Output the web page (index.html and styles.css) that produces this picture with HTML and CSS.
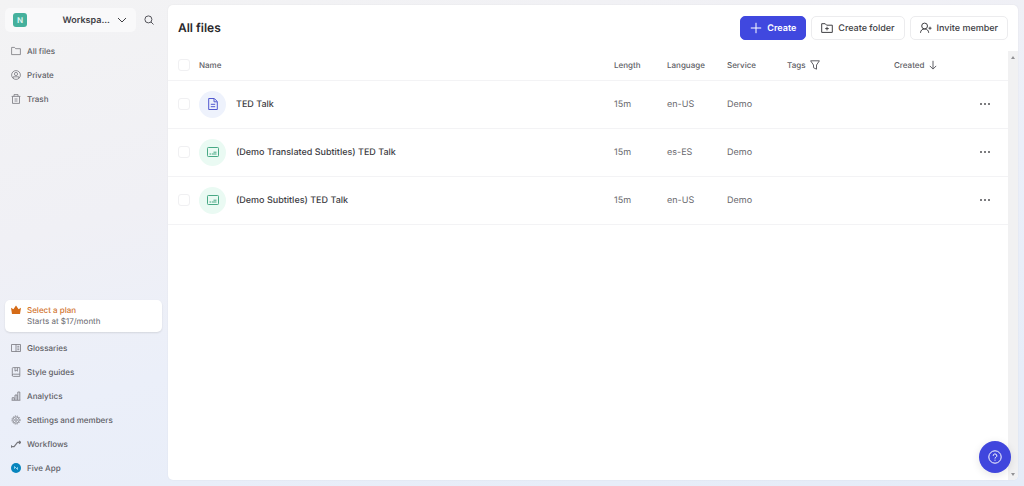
FILE: index.html
```html
<!DOCTYPE html>
<html lang="en">
<head>
<meta charset="utf-8">
<title>All files</title>
<link rel="stylesheet" href="styles.css">
</head>
<body>
<svg class="defs" aria-hidden="true">
  <symbol id="subtitles" viewBox="0 0 14 14"><rect x="1.5" y="2.5" width="11" height="9" rx=".8"/><path d="M3.5 9h1.8M6 9h4.5M7.5 7.2h3"/></symbol>
  <symbol id="dots" viewBox="0 0 12 4"><circle cx="2" cy="2" r="1"/><circle cx="6" cy="2" r="1"/><circle cx="10" cy="2" r="1"/></symbol>
</svg>
<div class="app">
  <aside class="sidebar">
    <div class="top">
      <button class="workspace" type="button">
        <span class="avatar">N</span>
        <span class="workspace-name">Workspa...</span>
        <svg class="icon" viewBox="0 0 10 10"><path d="M1 3l4 4 4-4"/></svg>
      </button>
      <button class="search" type="button" aria-label="Search"><svg class="icon" viewBox="0 0 10 10"><circle cx="4.4" cy="4.4" r="3.5"/><path d="M7 7l2.5 2.5"/></svg></button>
    </div>
    <nav class="nav">
      <a href="#"><svg class="icon" viewBox="0 0 10 10"><path d="M.6 8.6V1.4h2.9l1.2 1.3h4.7v5.9z"/></svg>All files</a>
      <a href="#"><svg class="icon" viewBox="0 0 10 10"><circle cx="5" cy="5" r="4.4"/><circle cx="5" cy="4" r="1.6"/><path d="M2.2 8.2V6.8h5.6v1.4"/></svg>Private</a>
      <a href="#"><svg class="icon" viewBox="0 0 10 10"><path d="M.6 2.4h8.8M3 2.2V.6h4v1.6M1.5 2.6v6.8h7V2.6M3.5 5h3M3.5 7h3"/></svg>Trash</a>
    </nav>
    <a class="plan" href="#">
      <svg class="crown" viewBox="0 0 10 10"><path d="M0 2.8l2.4 1.5L5 .5l2.6 3.8L10 2.8 9 9H1z"/></svg>
      <span><strong>Select a plan</strong><small>Starts at $17/month</small></span>
    </a>
    <nav class="nav">
      <a href="#"><svg class="icon" viewBox="0 0 10 10"><path d="M.5 1.5h9v7h-9zM5 1.5v7M6.3 3.3h2M6.3 5h2M6.3 6.7h2"/></svg>Glossaries</a>
      <a href="#"><svg class="icon" viewBox="0 0 10 10"><path d="M8.8 7.2H2.4a1 1 0 0 0 0 2.2h6.4V.6H2.2a.9.9 0 0 0-.9.9v6.9M4 .8v3.4l1.2-1 1.2 1V.8"/></svg>Style guides</a>
      <a href="#"><svg class="icon" viewBox="0 0 10 10"><path d="M.6 9.3h8.8M1.2 9V6.7h2V9M4 9V4h2v5M6.8 9V1h2v8"/></svg>Analytics</a>
      <a href="#"><svg class="icon" viewBox="0 0 10 10"><circle class="gear" cx="5" cy="5" r="4.1"/><circle cx="5" cy="5" r="3.2"/><circle cx="5" cy="5" r="1.3"/></svg>Settings and members</a>
      <a href="#"><svg class="icon flow" viewBox="0 0 10 10"><path d="M.3 7.6h2.8l3.4-4.2h2.2M.3 6.3v2.5M8 2l1.7 1.4L8 4.8"/></svg>Workflows</a>
      <a href="#"><svg class="five" viewBox="0 0 10 10"><circle cx="5" cy="5" r="5"/><path d="M3.5 3.5v2.3M3.5 3.5l3 3M6.5 6.5V4.2"/></svg>Five App</a>
    </nav>
  </aside>
  <main class="panel">
    <header class="header">
      <h1>All files</h1>
      <button class="btn primary" type="button"><svg class="icon" viewBox="0 0 12 12"><path d="M6 .8v10.4M.8 6h10.4"/></svg>Create</button>
      <button class="btn" type="button"><svg class="icon" viewBox="0 0 12 12"><path d="M.7 10.4V1.7h3.5l1.4 1.5h5.7v7.2zM6 4.8v3.6M4.2 6.6h3.6"/></svg>Create folder</button>
      <button class="btn" type="button"><svg class="icon" viewBox="0 0 12 12"><circle cx="4.6" cy="4" r="2.9"/><path d="M.5 10.8C.7 8.4 2 7 4.6 7s3.9 1.4 4.1 3.8M10 4.7v3M8.5 6.2h3"/></svg>Invite member</button>
    </header>
    <div class="body">
      <div class="scroll">
        <table>
          <colgroup><col class="c-check"><col><col class="c-length"><col class="c-mid"><col class="c-mid"><col class="c-tags"><col class="c-mid"><col class="c-more"></colgroup>
          <thead>
            <tr><th><input type="checkbox" aria-label="Select all"></th><th>Name</th><th>Length</th><th>Language</th><th>Service</th>
              <th><span class="label">Tags <svg class="icon" viewBox="0 0 10 10"><path d="M.6.8h8.8L6.5 5v4.2l-3-1.5V5z"/></svg></span></th>
              <th><span class="label">Created <svg class="icon sort" viewBox="0 0 8 10"><path d="M4 .8v8.2M.8 5.9L4 9.1l3.2-3.2"/></svg></span></th><th></th></tr>
          </thead>
          <tbody>
            <tr><td><input type="checkbox" aria-label="Select TED Talk"></td><td><div class="file"><span class="badge doc"><svg class="icon" viewBox="0 0 14 14"><path d="M2.7 1.5h5.6l3 3v8H2.7zM8 1.7v3.1h3M4.8 7.3h4.4M4.8 9.7h4.4"/></svg></span>TED Talk</div></td><td>15m</td><td>en-US</td><td>Demo</td><td></td><td></td><td><button class="more" type="button" aria-label="More"><svg viewBox="0 0 12 4"><use href="#dots"/></svg></button></td></tr>
            <tr><td><input type="checkbox" aria-label="Select translated subtitles"></td><td><div class="file"><span class="badge sub"><svg class="icon"><use href="#subtitles"/></svg></span>(Demo Translated Subtitles) TED Talk</div></td><td>15m</td><td>es-ES</td><td>Demo</td><td></td><td></td><td><button class="more" type="button" aria-label="More"><svg viewBox="0 0 12 4"><use href="#dots"/></svg></button></td></tr>
            <tr><td><input type="checkbox" aria-label="Select subtitles"></td><td><div class="file"><span class="badge sub"><svg class="icon"><use href="#subtitles"/></svg></span>(Demo Subtitles) TED Talk</div></td><td>15m</td><td>en-US</td><td>Demo</td><td></td><td></td><td><button class="more" type="button" aria-label="More"><svg viewBox="0 0 12 4"><use href="#dots"/></svg></button></td></tr>
          </tbody>
        </table>
      </div>
      <div class="track" aria-hidden="true"><span class="up"></span><span class="down"></span></div>
    </div>
  </main>
</div>
<button class="help" type="button" aria-label="Help"><svg class="icon" viewBox="0 0 14 14"><circle cx="7" cy="7" r="6.2"/><path d="M5.2 5.8a1.8 1.8 0 1 1 2.7 1.5c-.6.3-.9.6-.9 1.2M7 9.7v1"/></svg></button>
</body>
</html>
```

FILE: styles.css
```css
* { box-sizing: border-box; }

body {
  margin: 0;
  font-family: Inter, "Liberation Sans", sans-serif;
  font-size: 9px;
  line-height: 13px;
  color: #404044;
  text-rendering: geometricPrecision;
}

button {
  font: inherit;
  color: inherit;
  text-rendering: inherit;
  border: 0;
  background: none;
  padding: 0;
}

a { color: inherit; text-decoration: none; }

.defs { position: absolute; width: 0; height: 0; }

.icon {
  fill: none;
  stroke: currentColor;
  stroke-width: 1;
  width: 10px;
  height: 10px;
  flex: none;
}

.app {
  display: flex;
  min-height: 100vh;
  padding: 5px 6px 6px 5px;
  gap: 6px;
  background: linear-gradient(165deg, #f3f3f4 0%, #f0f0f5 32%, #ebeff9 55%, #e5ecf8 100%);
}

.sidebar {
  width: 157px;
  flex: none;
  display: flex;
  flex-direction: column;
}

.top {
  display: flex;
  align-items: center;
  gap: 4px;
  margin: 3px 0 7px;
}

.workspace {
  flex: 1;
  height: 24px;
  display: flex;
  align-items: center;
  gap: 7px;
  padding: 0 9px 0 8px;
  border-radius: 5px;
  background: #f9f9fa;
}

.workspace-name {
  flex: 1;
  text-align: right;
  font-size: 9px;
  font-weight: 600;
  color: #404045;
}

.avatar {
  width: 14px;
  height: 14px;
  border-radius: 3px;
  background: #45b09c;
  color: #d9f2ed;
  font-size: 8px;
  font-weight: 700;
  line-height: 14px;
}

.search {
  width: 22px;
  height: 20px;
  padding-right: 4px;
  color: #55555b;
  display: grid;
  place-items: center;
}

.nav { display: flex; flex-direction: column; }

.nav a {
  display: flex;
  align-items: center;
  gap: 6px;
  height: 24px;
  padding-left: 6px;
  font-size: 8px;
  line-height: 12px;
  font-weight: 500;
  color: #606066;
}

.nav .icon { color: #77777d; stroke-width: .8; }
.nav .flow { stroke-width: 1.2; }
.gear { stroke-dasharray: 1.2 1; }
.five { width: 10px; height: 10px; fill: #0785bd; }
.five path { fill: none; stroke: #8fd3ef; }

.plan {
  display: flex;
  gap: 6px;
  margin: auto 0 4px;
  padding: 5px 6px;
  border-radius: 5px;
  background: #fff;
  box-shadow: 0 1px 2px #0000001c;
  font-size: 8px;
  line-height: 11px;
}

.plan strong, .plan small { display: block; font-size: inherit; }
.plan strong { font-weight: 500; color: #d27531; }
.plan small { color: #68686e; }
.crown { width: 10px; height: 10px; fill: #d56b17; }

.panel {
  flex: 1;
  min-width: 0;
  display: flex;
  flex-direction: column;
  border-radius: 5px;
  background: #fff;
  box-shadow: 0 0 2px #00000010;
  overflow: hidden;
}

.header {
  display: flex;
  align-items: center;
  gap: 5px;
  height: 46px;
  padding: 0 10px;
}

h1 {
  flex: 1;
  margin: 0;
  font-size: 12px;
  line-height: 16px;
  font-weight: 600;
  color: #28282b;
}

.btn {
  display: flex;
  align-items: center;
  gap: 5px;
  height: 24px;
  padding: 0 9px;
  border: 1px solid #ececee;
  border-radius: 5px;
  font-weight: 500;
}

.btn .icon { width: 12px; height: 12px; }

.primary {
  background: #4048df;
  border-color: #4048df;
  color: #fff;
  font-weight: 600;
}

.body { flex: 1; display: flex; }
.scroll { flex: 1; min-width: 0; }

.track {
  width: 10px;
  display: flex;
  flex-direction: column;
  justify-content: space-between;
  align-items: center;
  padding: 5px 0 4px;
  background: #f1f1f2;
}

.up, .down { border: 2px solid transparent; }
.up { border-top: 0; border-bottom: 3px solid #929295; }
.down { border-bottom: 0; border-top: 3px solid #929295; }

table {
  width: 100%;
  table-layout: fixed;
  border-collapse: collapse;
}

.c-check { width: 31px; }
.c-length { width: 53px; }
.c-mid { width: 60px; }
.c-tags { width: 107px; }
.c-more { width: 54px; }

th, td {
  padding: 0;
  text-align: left;
  border-bottom: 1px solid #f3f3f5;
  white-space: nowrap;
}

th {
  height: 29px;
  font-size: 8px;
  line-height: 12px;
  font-weight: 500;
  color: #606066;
}

td { height: 48px; color: #68686d; }

th:first-child, td:first-child { padding-left: 10px; }

input[type="checkbox"] {
  appearance: none;
  display: block;
  width: 12px;
  height: 12px;
  margin: 0;
  border: 1px solid #f0f0f2;
  border-radius: 3px;
}

.label { display: flex; align-items: center; gap: 5px; }
.sort { width: 8px; }

.file {
  display: flex;
  align-items: center;
  gap: 10px;
  font-weight: 500;
  color: #404044;
}

.badge {
  width: 27px;
  height: 27px;
  border-radius: 50%;
  display: grid;
  place-items: center;
}

.badge .icon { width: 14px; height: 14px; }
.doc { background: #eef2fc; color: #5258cf; }
.sub { background: #eafaf3; color: #48a985; }

.more { display: block; margin-left: 25px; }
.more svg { display: block; width: 12px; height: 4px; fill: #505055; }

.help {
  position: fixed;
  right: 13px;
  bottom: 13px;
  width: 32px;
  height: 32px;
  border-radius: 50%;
  background: #4046dd;
  color: #fff;
  display: grid;
  place-items: center;
  box-shadow: 0 2px 8px #0000001c;
}

.help .icon { width: 14px; height: 14px; }
```
